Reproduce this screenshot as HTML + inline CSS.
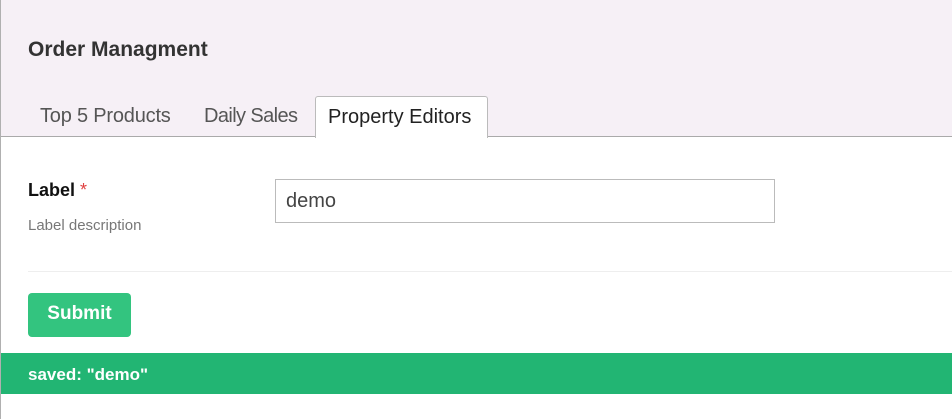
<!DOCTYPE html>
<html><head><meta charset="utf-8"><style>
*{margin:0;padding:0;box-sizing:border-box}
body{width:952px;height:419px;background:#fff;font-family:"Liberation Sans",sans-serif;position:relative;overflow:hidden}
.lb{position:absolute;left:0;top:0;width:1px;height:419px;background:#b0b0b0}
.hdr{position:absolute;left:1px;top:0;width:951px;height:137px;background:#f6f0f6;border-bottom:1px solid #aaa}
.title{position:absolute;left:28px;top:38px;font-size:21px;font-weight:bold;color:#333}
.tab{position:absolute;top:105px;font-size:20px;color:#555;letter-spacing:-0.2px}
.atab{position:absolute;left:315px;top:96px;width:173px;height:42px;background:#fff;border:1px solid #bbb;border-bottom:none;border-radius:3px 3px 0 0;font-size:20px;color:#222;padding:9px 0 0 12px}
.lab{position:absolute;left:28px;top:180px;font-size:18px;font-weight:bold;color:#111}
.lab span{color:#e04040;font-weight:normal}
.desc{position:absolute;left:28px;top:217px;font-size:15px;color:#777}
.inp{position:absolute;left:275px;top:179px;width:500px;height:44px;border:1px solid #bbb;font-size:20px;color:#444;padding:10px 0 0 10px}
.hr{position:absolute;left:28px;top:271px;width:924px;height:1px;background:#eee}
.btn{position:absolute;left:28px;top:293px;width:103px;height:44px;background:#33c47f;border-radius:4px;color:#fff;font-weight:bold;font-size:19px;text-align:center;line-height:42px}
.bar{position:absolute;left:1px;top:353px;width:951px;height:41px;background:#22b573;color:#fff;font-weight:bold;font-size:17px;padding:12px 0 0 27px}
</style></head><body>
<div class="lb"></div>
<div class="hdr"></div>
<div class="title">Order Managment</div>
<div class="tab" style="left:40px">Top 5 Products</div>
<div class="tab" style="left:204px;letter-spacing:-0.6px">Daily Sales</div>
<div class="atab">Property Editors</div>
<div class="lab">Label <span>*</span></div>
<div class="desc">Label description</div>
<div class="inp">demo</div>
<div class="hr"></div>
<div class="btn">Submit</div>
<div class="bar">saved: "demo"</div>
</body></html>
